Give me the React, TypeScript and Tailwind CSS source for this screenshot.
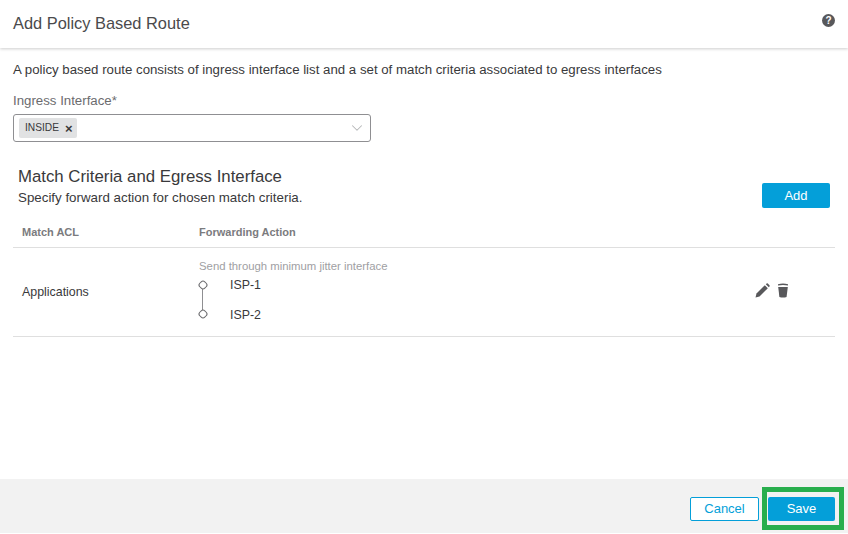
import { ChevronDown } from 'lucide-react';

const font = { fontFamily: '"Liberation Sans", Arial, sans-serif' };

function HelpIcon(): React.ReactElement {
  return (
    <span className="flex h-[13px] w-[13px] items-center justify-center rounded-full bg-[#58585b] text-[10px] leading-none font-bold text-white">
      ?
    </span>
  );
}

function PencilIcon(): React.ReactElement {
  return (
    <svg width="15" height="15" viewBox="0 0 15 15" fill="#58585b">
      <path d="M0.5 14.5 L1.5 10.5 L9.8 2.2 L12.8 5.2 L4.5 13.5 Z" />
      <path d="M10.8 1.2 L11.6 0.5 Q12.2 0.1 12.8 0.5 L14.5 2.2 Q14.9 2.8 14.5 3.4 L13.8 4.2 Z" />
    </svg>
  );
}

function TrashIcon(): React.ReactElement {
  return (
    <svg width="12" height="15" viewBox="0 0 12 15" fill="#58585b">
      <path d="M1 1.2 Q6 0 11 1.2 L11 2.4 Q6 1.4 1 2.4 Z" />
      <path d="M1.2 4 L10.8 4 L9.6 14 Q6 15 2.4 14 Z" />
    </svg>
  );
}

function NodeDot(): React.ReactElement {
  return <span className="relative h-[8px] w-[8px] rotate-45 rounded-[3px] border border-[#6b6b6e] bg-white" />;
}

export default function App(): React.ReactElement {
  return (
    <div className="relative flex h-[534px] w-[848px] flex-col overflow-hidden bg-white text-[#39393b]" style={font}>
      <header className="flex h-[48px] shrink-0 justify-between pr-[13px] pl-[13px] shadow-[0_1px_3px_rgba(0,0,0,0.2)]">
        <h1 className="pt-[12px] text-[16.4px] leading-[22px] font-normal text-[#4a4a4c]">Add Policy Based Route</h1>
        <div className="pt-[14px]">
          <HelpIcon />
        </div>
      </header>

      <main className="flex-1 px-[13px]">
        <p className="mt-[14px] text-[13.25px] leading-[16px]">
          A policy based route consists of ingress interface list and a set of match criteria associated to egress interfaces
        </p>

        <label className="mt-[15px] block text-[13.25px] leading-[16px] text-[#6b6b6e]">Ingress Interface*</label>
        <div className="mt-[5px] flex h-[28px] w-[358px] items-center justify-between rounded-[3px] border border-[#8f8f92] pr-[4px] pl-[5px]">
          <span className="flex h-[20px] w-[58px] items-center gap-[6px] rounded-[2px] bg-[#e1e2e3] pl-[6px] text-[10.2px] text-[#39393b]">
            INSIDE
            <span className="text-[13px] leading-none font-bold">×</span>
          </span>
          <ChevronDown size={18} className="text-[#b5b6b8]" strokeWidth={1.4} />
        </div>

        <section className="mt-[23px] flex items-start justify-between pr-[5px] pl-[5px]">
          <div>
            <h2 className="text-[16.8px] leading-[24px] font-normal">Match Criteria and Egress Interface</h2>
            <p className="mt-[1px] text-[13.33px] leading-[16px]">Specify forward action for chosen match criteria.</p>
          </div>
          <button className="mt-[18px] h-[25px] w-[68px] rounded-[2px] bg-[#049fd9] text-[13px] text-white">Add</button>
        </section>

        <div className="mt-[15px] flex h-[25px] items-start border-b border-[#dfdfdf] pl-[9px] text-[11px] leading-[18px] font-bold text-[#7b7b7e]">
          <span className="w-[177px]">Match ACL</span>
          <span>Forwarding Action</span>
        </div>

        <div className="flex h-[89px] items-center border-b border-[#dfdfdf] pr-[46px] pl-[9px] text-[12.4px]">
          <span className="w-[177px]">Applications</span>
          <div className="flex-1 self-start pt-[12px]">
            <p className="text-[11.35px] leading-[12px] text-[#a0a0a3]">Send through minimum jitter interface</p>
            <div className="relative mt-[6px] flex flex-col gap-[16px] pl-[31px]">
              <span className="leading-[14px]">ISP-1</span>
              <span className="leading-[14px]">ISP-2</span>
              <span className="absolute top-[3px] left-[-1px] flex h-[37px] w-[9px] flex-col items-center justify-between">
                <span className="absolute top-[4px] h-[30px] w-px bg-[#8f8f92]" />
                <NodeDot />
                <NodeDot />
              </span>
            </div>
          </div>
          <div className="mb-[3px] flex items-center gap-[7px]">
            <PencilIcon />
            <TrashIcon />
          </div>
        </div>
      </main>

      <footer className="mb-[1px] flex h-[54px] shrink-0 items-start justify-end gap-[9px] bg-[#f2f2f2] pt-[18px] pr-[13px]">
        <button className="h-[24px] w-[69px] rounded-[2px] border border-[#049fd9] bg-white text-[13px] text-[#049fd9]">Cancel</button>
        <button className="h-[24px] w-[67px] rounded-[2px] bg-[#049fd9] text-[13px] text-white">Save</button>
      </footer>

      {/* highlight drawn over the screenshot */}
      <div className="absolute top-[487px] left-[762px] h-[43px] w-[82px] border-[5px] border-[#28ae4d]" />
    </div>
  );
}
